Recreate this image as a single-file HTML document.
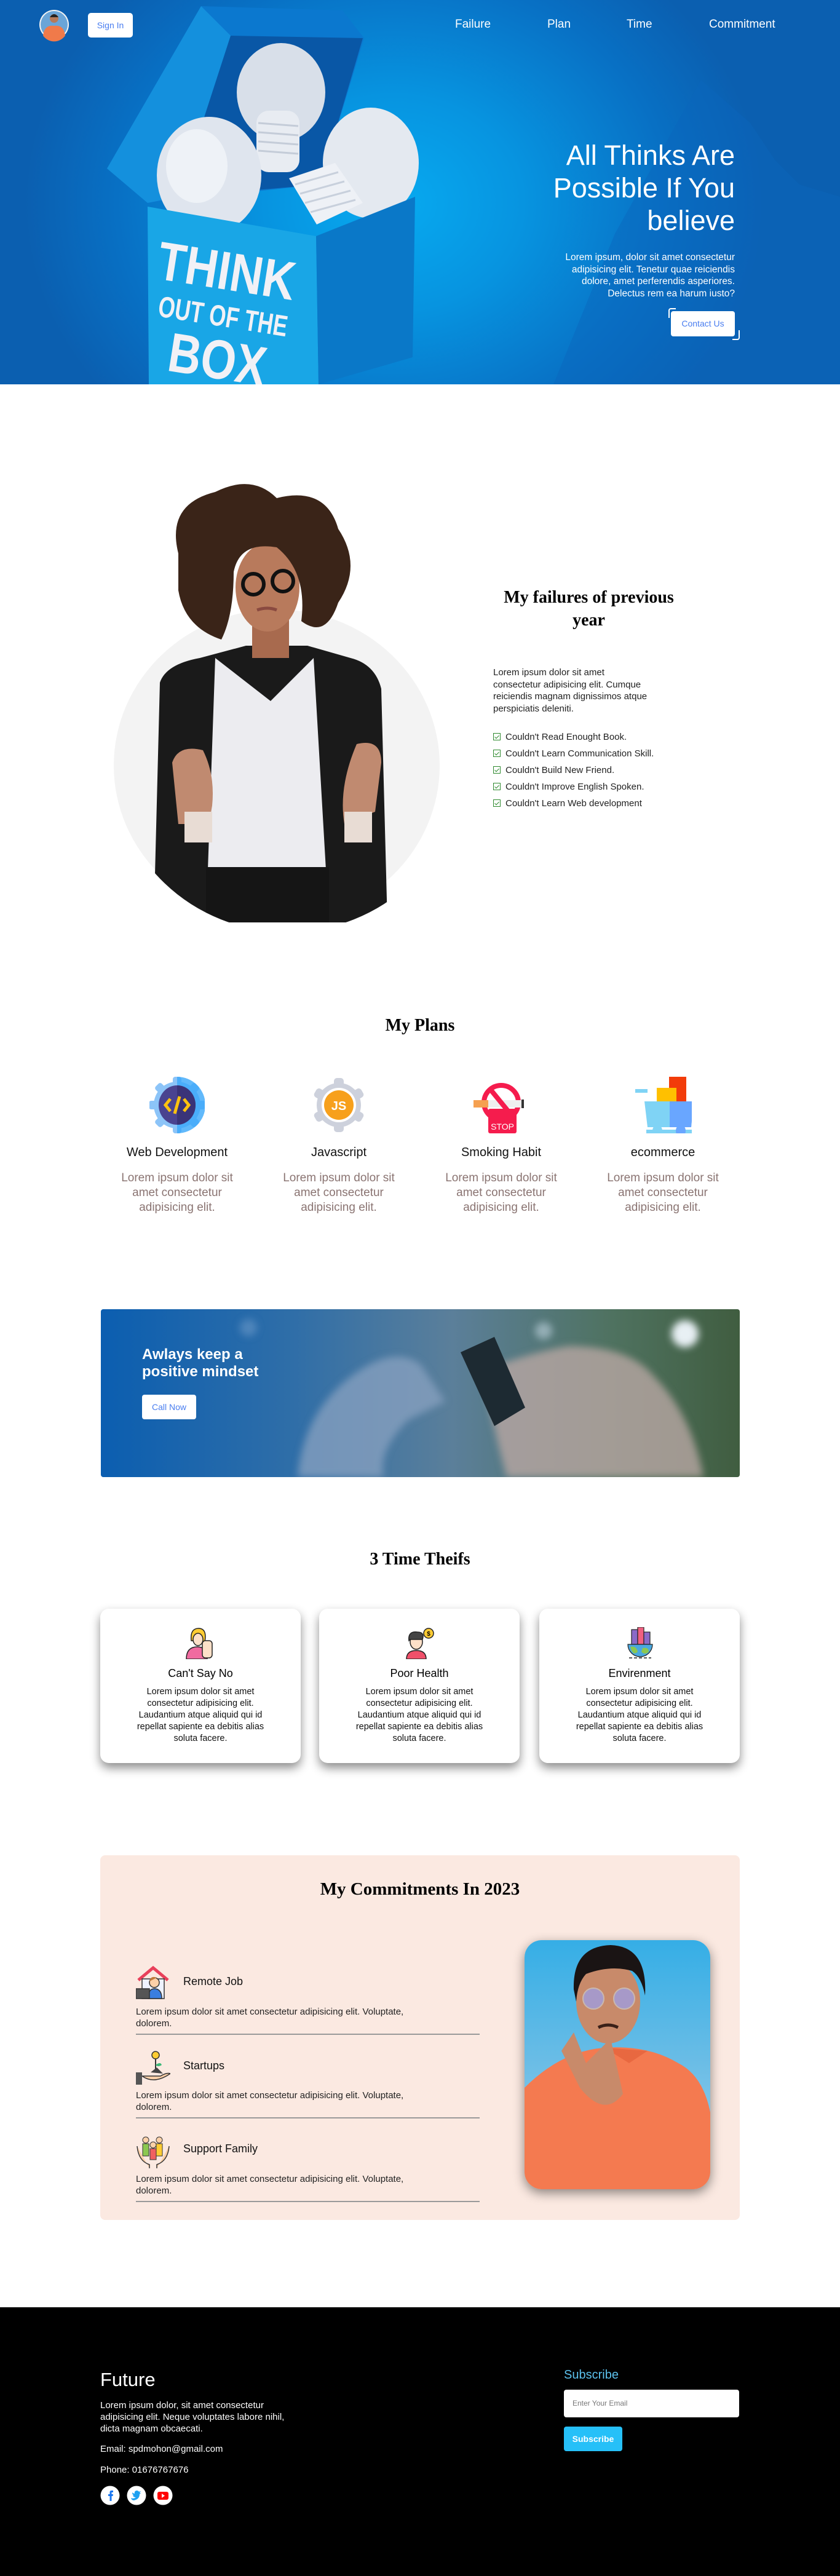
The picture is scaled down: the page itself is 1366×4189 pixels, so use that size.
<!DOCTYPE html>
<html><head><meta charset="utf-8">
<style>
*{margin:0;padding:0;box-sizing:border-box}
body{width:1366px;height:4189px;position:relative;background:#fff;font-family:"Liberation Sans",sans-serif;overflow:hidden}
.a{position:absolute}
.serif{font-family:"Liberation Serif","DejaVu Serif",serif;font-weight:bold;color:#000}
.nav{color:#fff;font-size:19px;top:29px}
.pt{font-size:20px;color:#111;text-align:center;width:260px;font-weight:500}
.pd{font-size:19px;color:#8a7472;text-align:center;width:260px;line-height:24px}
.card{background:#fff;border-radius:14px;box-shadow:0 8px 16px rgba(0,0,0,.45);width:326px;height:251px;top:2616px}
.card h4{position:absolute;top:95px;width:100%;text-align:center;font-size:18px;font-weight:500;color:#000}
.card p{position:absolute;top:126px;width:100%;text-align:center;font-size:14.5px;line-height:19px;color:#111}
.ct{font-size:18px;font-weight:500;color:#111}
.cd{font-size:15px;line-height:19px;color:#222;width:560px}
.hr{height:2px;background:#9a9a9a;width:559px;left:221px}
.li{font-size:15px;color:#222;left:802px}
.li b{display:inline-block;width:12px;height:12px;border:1.5px solid #2f8a2f;margin-right:8px;vertical-align:-1px;position:relative;background:#fff}
.li b:after{content:"";position:absolute;left:2.5px;top:0.5px;width:3px;height:6px;border:solid #2f8a2f;border-width:0 1.5px 1.5px 0;transform:rotate(45deg)}
</style></head><body>

<!-- HERO -->
<div class="a" style="left:0;top:0;width:1366px;height:625px;background:radial-gradient(ellipse 600px 500px at 640px 330px,#07aaf0 0%,#0794e0 35%,#0870c4 75%,#0b5fb0 100%)">
<svg class="a" style="left:0;top:0" width="1366" height="625">
<path d="M1140 130 L1220 200 L1260 260 L1300 300 L1366 320 L1366 625 L900 625 L1000 380 Z" fill="#0a66bd" opacity=".45"/>
<polygon points="327,10 557,17 592,62 520,300 240,330 174,274" fill="#0b78cf"/>
<polygon points="375,58 590,62 520,300 290,320" fill="#0957a6"/>
<polygon points="327,10 375,58 290,320 240,330 174,274" fill="#1490dd"/>
<ellipse cx="457" cy="150" rx="72" ry="80" fill="#d8dfe9"/>
<rect x="417" y="180" width="70" height="100" rx="20" fill="#e8ecf2"/>
<g stroke="#c4ccd8" stroke-width="3"><line x1="420" y1="200" x2="485" y2="205"/><line x1="420" y1="215" x2="485" y2="220"/><line x1="420" y1="230" x2="485" y2="235"/><line x1="420" y1="245" x2="485" y2="250"/></g>
<ellipse cx="340" cy="285" rx="85" ry="95" fill="#dfe5ee"/>
<ellipse cx="320" cy="270" rx="50" ry="60" fill="#eef2f7"/>
<ellipse cx="603" cy="265" rx="78" ry="90" fill="#e4e9f0"/>
<path d="M470 290 L545 265 L590 330 L515 365 Z" fill="#eef1f6"/>
<g stroke="#c8d0dc" stroke-width="3"><line x1="480" y1="300" x2="550" y2="280"/><line x1="488" y1="315" x2="560" y2="295"/><line x1="496" y1="330" x2="570" y2="310"/><line x1="505" y1="345" x2="578" y2="325"/></g>
<polygon points="240,336 514,384 518,625 242,625" fill="#19a6e6"/>
<polygon points="514,384 675,320 671,581 518,625" fill="#0a78c8"/>
<g font-family="Liberation Sans,sans-serif" font-weight="bold" fill="#f1f1f6" transform="rotate(9 360 480)">
<text x="250" y="470" font-size="88" textLength="225" lengthAdjust="spacingAndGlyphs">THINK</text>
<text x="262" y="530" font-size="48" textLength="212" lengthAdjust="spacingAndGlyphs">OUT OF THE</text>
<text x="290" y="615" font-size="90" textLength="160" lengthAdjust="spacingAndGlyphs">BOX</text>
</g>
<circle cx="88" cy="40" r="24" fill="#f3f3f3"/>
<circle cx="88" cy="40" r="22" fill="#6aa5d8"/>
<path d="M70 58 Q72 40 88 42 Q104 40 106 58 A22 22 0 0 1 70 58Z" fill="#f07a4a"/>
<circle cx="88" cy="30" r="7" fill="#b67a5a"/><path d="M81 28 Q88 18 95 28" fill="#222"/>
</svg>
<div class="a" style="left:143px;top:21px;width:73px;height:40px;background:#fff;border-radius:5px;color:#4a7ef0;font-size:14px;text-align:center;line-height:40px">Sign In</div>
<div class="a nav" style="left:740px">Failure</div>
<div class="a nav" style="left:890px">Plan</div>
<div class="a nav" style="left:1019px">Time</div>
<div class="a nav" style="left:1153px">Commitment</div>
<div class="a" style="right:171px;top:226px;width:400px;text-align:right;color:#fff;font-size:45px;line-height:53px;font-weight:500">All Thinks Are<br>Possible If You<br>believe</div>
<div class="a" style="right:171px;top:409px;width:400px;text-align:right;color:#fff;font-size:15.5px;line-height:19.5px">Lorem ipsum, dolor sit amet consectetur<br>adipisicing elit. Tenetur quae reiciendis<br>dolore, amet perferendis asperiores.<br>Delectus rem ea harum iusto?</div>
<div class="a" style="left:1087px;top:501px;width:12px;height:16px;border-left:2px solid #fff;border-top:2px solid #fff;border-radius:4px 0 0 0"></div>
<div class="a" style="left:1191px;top:537px;width:12px;height:16px;border-right:2px solid #fff;border-bottom:2px solid #fff;border-radius:0 0 4px 0"></div>
<div class="a" style="left:1091px;top:506px;width:104px;height:41px;background:#fff;border-radius:4px;color:#4a7ef0;font-size:14px;text-align:center;line-height:41px">Contact Us</div>
</div>

<!-- FAILURES -->
<svg class="a" style="left:150px;top:780px" width="600" height="722">
<ellipse cx="300" cy="465" rx="265" ry="254" fill="#f3f3f3"/>
<clipPath id="cc"><path d="M0 0 H600 V465 A265 254 0 0 1 35 465 V0Z"/></clipPath>
<g clip-path="url(#cc)">
<path d="M110 330 Q120 300 175 290 L250 270 L350 270 L420 290 Q460 300 470 340 L480 720 L100 720 Z" fill="#1a1a1a"/>
<path d="M200 290 L290 360 L360 290 L385 720 L185 720 Z" fill="#ececf0"/>
<path d="M130 460 Q140 430 180 440 Q200 480 195 530 L190 560 L140 560 Z" fill="#c08a70"/>
<path d="M430 430 Q470 420 470 460 L460 540 L410 560 Q400 500 430 430Z" fill="#c08a70"/>
<rect x="150" y="540" width="45" height="50" fill="#e8dcd4"/>
<rect x="410" y="540" width="45" height="50" fill="#e8dcd4"/>
<rect x="185" y="630" width="200" height="90" fill="#151515"/>
<rect x="260" y="220" width="60" height="70" fill="#a86a4e"/>
<ellipse cx="285" cy="175" rx="52" ry="72" fill="#b87a5c"/>
<path d="M140 120 Q120 40 200 20 Q260 -10 300 30 Q380 10 400 80 Q440 140 400 200 Q380 260 340 230 Q350 150 300 110 Q240 100 230 150 Q230 220 210 260 Q150 240 140 180Z" fill="#3a2418"/>
<circle cx="262" cy="170" r="17" fill="none" stroke="#111" stroke-width="6"/>
<circle cx="310" cy="165" r="17" fill="none" stroke="#111" stroke-width="6"/>
<path d="M268 212 Q285 206 300 212" stroke="#8a4a40" stroke-width="5" fill="none"/>
</g>
</svg>
<div class="a serif" style="left:800px;top:953px;width:315px;text-align:center;font-size:28px;line-height:37px">My failures of previous year</div>
<div class="a" style="left:802px;top:1084px;font-size:15px;line-height:19.5px;color:#222">Lorem ipsum dolor sit amet<br>consectetur adipisicing elit. Cumque<br>reiciendis magnam dignissimos atque<br>perspiciatis deleniti.</div>
<div class="a li" style="top:1190px"><b></b>Couldn't Read Enought Book.</div>
<div class="a li" style="top:1217px"><b></b>Couldn't Learn Communication Skill.</div>
<div class="a li" style="top:1244px"><b></b>Couldn't Build New Friend.</div>
<div class="a li" style="top:1271px"><b></b>Couldn't Improve English Spoken.</div>
<div class="a li" style="top:1298px"><b></b>Couldn't Learn Web development</div>

<!-- PLANS -->
<div class="a serif" style="left:483px;top:1652px;width:400px;text-align:center;font-size:28px">My Plans</div>
<svg class="a" style="left:243px;top:1751px" width="90" height="92" viewBox="0 0 90 92">
<g fill="#8cc4f8"><rect x="38" y="0" width="14" height="92" rx="4"/><rect x="38" y="0" width="14" height="92" rx="4" transform="rotate(45 45 46)"/><rect x="38" y="0" width="14" height="92" rx="4" transform="rotate(90 45 46)"/><rect x="38" y="0" width="14" height="92" rx="4" transform="rotate(135 45 46)"/></g>
<circle cx="45" cy="46" r="38" fill="#8cc4f8"/><path d="M45 0 V92 A46 46 0 0 0 45 0" fill="#3aa8fa" opacity=".8"/>
<ellipse cx="45" cy="46" rx="30" ry="32" fill="#4a4390"/><path d="M45 14 A30 32 0 0 1 45 78Z" fill="#3a3378"/>
<path d="M34 36 L26 46 L34 56 M56 36 L64 46 L56 56 M49 32 L41 60" stroke="#ffc20e" stroke-width="5" fill="none"/>
</svg>
<svg class="a" style="left:506px;top:1751px" width="90" height="92" viewBox="0 0 90 92">
<g fill="#cdd1dc"><rect x="37" y="2" width="16" height="88" rx="5"/><rect x="37" y="2" width="16" height="88" rx="5" transform="rotate(60 45 46)"/><rect x="37" y="2" width="16" height="88" rx="5" transform="rotate(120 45 46)"/></g>
<circle cx="45" cy="46" r="36" fill="#cdd1dc"/><circle cx="45" cy="46" r="28" fill="#fff"/><circle cx="45" cy="46" r="24" fill="#f7a01c"/>
<text x="45" y="54" text-anchor="middle" font-family="Liberation Sans,sans-serif" font-weight="bold" font-size="20" fill="#fff">JS</text>
</svg>
<svg class="a" style="left:770px;top:1751px" width="90" height="92" viewBox="0 0 90 92">
<rect x="24" y="52" width="46" height="40" rx="3" fill="#f51c4d"/>
<circle cx="45" cy="42" r="28" fill="none" stroke="#f51c4d" stroke-width="8"/>
<rect x="0" y="38" width="80" height="12" fill="#eee"/><rect x="0" y="38" width="24" height="12" fill="#f5a050"/><rect x="78" y="37" width="4" height="14" fill="#333"/>
<line x1="27" y1="20" x2="63" y2="64" stroke="#f51c4d" stroke-width="8"/>
<text x="47" y="86" text-anchor="middle" font-family="Liberation Sans,sans-serif" font-size="14" fill="#fff">STOP</text>
</svg>
<svg class="a" style="left:1033px;top:1751px" width="92" height="92" viewBox="0 0 92 92">
<rect x="55" y="0" width="28" height="42" fill="#f23c0a"/><rect x="35" y="18" width="32" height="24" fill="#ffc000"/>
<rect x="0" y="20" width="20" height="6" fill="#7fd3f5"/>
<path d="M15 40 H95 L91 82 H20Z" fill="#7fd3f5"/><path d="M56 40 H95 L91 82 H56Z" fill="#69a6ff"/>
<rect x="18" y="86" width="75" height="6" fill="#7fd3f5"/>
<ellipse cx="36" cy="88" rx="8" ry="10" fill="#7fd3f5"/><ellipse cx="74" cy="88" rx="8" ry="10" fill="#69a6ff"/>
</svg>
<div class="a pt" style="left:158px;top:1863px">Web Development</div>
<div class="a pt" style="left:421px;top:1863px">Javascript</div>
<div class="a pt" style="left:685px;top:1863px">Smoking Habit</div>
<div class="a pt" style="left:948px;top:1863px">ecommerce</div>
<div class="a pd" style="left:158px;top:1904px">Lorem ipsum dolor sit<br>amet consectetur<br>adipisicing elit.</div>
<div class="a pd" style="left:421px;top:1904px">Lorem ipsum dolor sit<br>amet consectetur<br>adipisicing elit.</div>
<div class="a pd" style="left:685px;top:1904px">Lorem ipsum dolor sit<br>amet consectetur<br>adipisicing elit.</div>
<div class="a pd" style="left:948px;top:1904px">Lorem ipsum dolor sit<br>amet consectetur<br>adipisicing elit.</div>

<!-- BANNER -->
<div class="a" style="left:164px;top:2129px;width:1039px;height:273px;border-radius:4px;overflow:hidden;background:linear-gradient(90deg,#0b5eb0 0%,#2f6ea8 30%,#5b7f9a 55%,#4f7260 80%,#405d40 100%)">
<svg class="a" style="left:0;top:0" width="1039" height="273">
<defs><filter id="bl"><feGaussianBlur stdDeviation="6"/></filter></defs>
<g filter="url(#bl)">
<circle cx="950" cy="40" r="22" fill="#e8f0f4"/><circle cx="720" cy="35" r="14" fill="#b0c6d0" opacity=".7"/><circle cx="240" cy="30" r="14" fill="#6b98c8" opacity=".6"/>
<path d="M320 273 Q330 160 420 100 Q480 60 520 90 L560 150 L500 180 Q450 230 460 273Z" fill="#8aa2c0" opacity=".75"/>
<path d="M620 100 Q700 70 760 60 Q860 60 900 110 Q960 170 980 273 L660 273 Q640 200 620 100Z" fill="#b8a6a2" opacity=".8"/>
</g>
<path d="M585 70 L640 45 L690 160 L640 190 Z" fill="#1d2a32"/>
</svg>
<div class="a" style="left:67px;top:60px;color:#fff;font-size:24px;line-height:28px;font-weight:bold">Awlays keep a<br>positive mindset</div>
<div class="a" style="left:67px;top:139px;width:88px;height:40px;background:#fff;border-radius:4px;color:#4a7ef0;font-size:14px;text-align:center;line-height:40px">Call Now</div>
</div>

<!-- TIME THEIFS -->
<div class="a serif" style="left:483px;top:2520px;width:400px;text-align:center;font-size:28px">3 Time Theifs</div>
<div class="a card" style="left:163px">
<svg class="a" style="left:138px;top:30px" width="50" height="52" viewBox="0 0 50 52"><path d="M10 22 Q8 2 22 2 Q36 2 32 24Z" fill="#ffcc33" stroke="#222" stroke-width="1.5"/><ellipse cx="21" cy="20" rx="8" ry="10" fill="#fde0c8" stroke="#222" stroke-width="1.5"/><path d="M2 52 Q2 32 20 32 Q36 32 36 52Z" fill="#f06ba0" stroke="#222" stroke-width="1.5"/><rect x="28" y="22" width="16" height="28" rx="5" fill="#fde0c8" stroke="#222" stroke-width="1.5"/></svg>
<h4>Can't Say No</h4><p>Lorem ipsum dolor sit amet<br>consectetur adipisicing elit.<br>Laudantium atque aliquid qui id<br>repellat sapiente ea debitis alias<br>soluta facere.</p></div>
<div class="a card" style="left:519px">
<svg class="a" style="left:138px;top:30px" width="52" height="52" viewBox="0 0 52 52"><circle cx="40" cy="10" r="8" fill="#ffcc33" stroke="#222" stroke-width="1.5"/><text x="40" y="14" text-anchor="middle" font-size="10" font-family="Liberation Sans" font-weight="bold">$</text><ellipse cx="20" cy="24" rx="10" ry="12" fill="#fde0c8" stroke="#222" stroke-width="1.5"/><path d="M8 22 Q6 6 22 8 Q34 8 30 20 L10 20Z" fill="#444" stroke="#222" stroke-width="1.5"/><path d="M4 52 Q4 38 20 38 Q36 38 36 52Z" fill="#f0506a" stroke="#222" stroke-width="1.5"/></svg>
<h4>Poor Health</h4><p>Lorem ipsum dolor sit amet<br>consectetur adipisicing elit.<br>Laudantium atque aliquid qui id<br>repellat sapiente ea debitis alias<br>soluta facere.</p></div>
<div class="a card" style="left:877px">
<svg class="a" style="left:138px;top:30px" width="52" height="52" viewBox="0 0 52 52"><rect x="12" y="4" width="10" height="24" fill="#8a6ac8" stroke="#222" stroke-width="1.2"/><rect x="22" y="0" width="10" height="28" fill="#f06080" stroke="#222" stroke-width="1.2"/><rect x="32" y="8" width="10" height="20" fill="#8a6ac8" stroke="#222" stroke-width="1.2"/><path d="M6 28 H46 A20 20 0 0 1 6 28Z" fill="#4aa8e0" stroke="#222" stroke-width="1.2"/><path d="M10 32 Q20 30 22 40 Q16 46 12 38Z M30 34 Q40 32 40 40 Q34 46 28 40Z" fill="#8cc850"/><line x1="8" y1="50" x2="44" y2="50" stroke="#222" stroke-width="1.5" stroke-dasharray="5 3"/></svg>
<h4>Envirenment</h4><p>Lorem ipsum dolor sit amet<br>consectetur adipisicing elit.<br>Laudantium atque aliquid qui id<br>repellat sapiente ea debitis alias<br>soluta facere.</p></div>

<!-- COMMITMENTS -->
<div class="a" style="left:163px;top:3017px;width:1040px;height:593px;background:#fbe9e1;border-radius:8px"></div>
<div class="a serif" style="left:383px;top:3056px;width:600px;text-align:center;font-size:29px">My Commitments In 2023</div>
<svg class="a" style="left:221px;top:3196px" width="56" height="56" viewBox="0 0 56 56"><path d="M4 24 L28 4 L52 24" fill="none" stroke="#e8405a" stroke-width="5"/><rect x="10" y="22" width="36" height="32" fill="#eef2ff" stroke="#333" stroke-width="1.5"/><circle cx="30" cy="28" r="8" fill="#fcd0a8" stroke="#333" stroke-width="1.5"/><path d="M22 26 Q24 16 34 20" fill="#c07a3a"/><path d="M20 54 Q20 38 30 38 Q42 38 42 54Z" fill="#3a7ee0" stroke="#333" stroke-width="1.5"/><rect x="0" y="38" width="22" height="16" fill="#555" stroke="#333" stroke-width="1.5"/></svg>
<div class="a ct" style="left:298px;top:3212px">Remote Job</div>
<div class="a cd" style="left:221px;top:3262px">Lorem ipsum dolor sit amet consectetur adipisicing elit. Voluptate,<br>dolorem.</div>
<div class="a hr" style="top:3307px"></div>
<svg class="a" style="left:221px;top:3334px" width="56" height="56" viewBox="0 0 56 56"><circle cx="32" cy="8" r="6" fill="#ffcc33" stroke="#333" stroke-width="1.5"/><line x1="32" y1="14" x2="32" y2="32" stroke="#333" stroke-width="2"/><path d="M32 24 Q40 18 42 24 Q36 28 32 24" fill="#3cb878"/><path d="M24 36 L34 28 L44 38 Z" fill="#444"/><path d="M10 42 Q30 56 56 38 Q50 36 40 42 L20 42Z" fill="#fcd0a8" stroke="#333" stroke-width="1.5"/><rect x="0" y="36" width="10" height="20" fill="#555"/></svg>
<div class="a ct" style="left:298px;top:3349px">Startups</div>
<div class="a cd" style="left:221px;top:3398px">Lorem ipsum dolor sit amet consectetur adipisicing elit. Voluptate,<br>dolorem.</div>
<div class="a hr" style="top:3443px"></div>
<svg class="a" style="left:221px;top:3470px" width="56" height="56" viewBox="0 0 56 56"><circle cx="16" cy="10" r="5" fill="#fcd0a8" stroke="#333"/><circle cx="38" cy="10" r="5" fill="#fcd0a8" stroke="#333"/><circle cx="28" cy="18" r="5" fill="#fcd0a8" stroke="#333"/><rect x="11" y="16" width="10" height="20" fill="#8cc850" stroke="#333"/><rect x="33" y="16" width="10" height="20" fill="#ffcc33" stroke="#333"/><rect x="23" y="24" width="10" height="18" fill="#f06060" stroke="#333"/><path d="M2 20 Q4 44 22 50 L22 56 M54 20 Q52 44 34 50 L34 56" fill="#fcd0a8" stroke="#333" stroke-width="1.5"/></svg>
<div class="a ct" style="left:298px;top:3484px">Support Family</div>
<div class="a cd" style="left:221px;top:3534px">Lorem ipsum dolor sit amet consectetur adipisicing elit. Voluptate,<br>dolorem.</div>
<div class="a hr" style="top:3579px"></div>
<div class="a" style="left:853px;top:3155px;width:302px;height:405px;border-radius:28px;overflow:hidden;box-shadow:0 6px 18px rgba(0,0,0,.45);background:linear-gradient(180deg,#35aee6 0%,#6bbde6 50%,#9fd2ee 100%)">
<svg width="302" height="405">
<path d="M0 240 Q60 180 130 175 Q200 170 250 200 Q290 220 302 280 L302 405 L0 405Z" fill="#f47a50"/>
<path d="M130 175 L170 200 L200 180Z" fill="#e86840"/>
<ellipse cx="136" cy="100" rx="52" ry="68" fill="#c88a6a"/>
<path d="M80 80 Q78 10 140 8 Q200 10 196 90 Q190 60 175 50 Q140 40 100 55 Q86 70 84 100Z" fill="#1a1414"/>
<circle cx="112" cy="95" r="17" fill="#9aa0f0" opacity=".7" stroke="#ccc" stroke-width="2"/>
<circle cx="162" cy="95" r="17" fill="#9aa0f0" opacity=".7" stroke="#ccc" stroke-width="2"/>
<path d="M120 142 Q136 134 152 142" stroke="#3a2018" stroke-width="5" fill="none"/>
<path d="M60 180 L80 150 L100 200 L140 160 L160 250 Q130 290 90 240Z" fill="#c88a6a"/>
</svg></div>

<!-- FOOTER -->
<div class="a" style="left:0;top:3752px;width:1366px;height:437px;background:#000"></div>
<div class="a" style="left:163px;top:3852px;color:#fff;font-size:31px;font-weight:500">Future</div>
<div class="a" style="left:163px;top:3902px;color:#fff;font-size:15px;line-height:19px">Lorem ipsum dolor, sit amet consectetur<br>adipisicing elit. Neque voluptates labore nihil,<br>dicta magnam obcaecati.</div>
<div class="a" style="left:163px;top:3974px;color:#fff;font-size:15px">Email: spdmohon@gmail.com</div>
<div class="a" style="left:163px;top:4008px;color:#fff;font-size:15px">Phone: 01676767676</div>
<svg class="a" style="left:163px;top:4042px" width="120" height="32">
<circle cx="16" cy="16" r="15.5" fill="#fff"/><path d="M18 8 H21 V11 H18.5 V14 H21 L20.5 17 H18.5 V25 H15.5 V17 H13 V14 H15.5 V11 Q15.5 8 18 8Z" fill="#1877f2"/>
<circle cx="59" cy="16" r="15.5" fill="#fff"/><path d="M50 20 Q54 22 58 19 Q54 19 53 16 Q55 16 55 16 Q52 15 52 11 Q54 13 56 13 Q55 9 59 8 Q62 8 63 10 L66 9 L64 12 Q66 12 66 12 L64 14 Q64 22 55 24 Q51 24 50 20Z" fill="#1da1f2"/>
<circle cx="102" cy="16" r="15.5" fill="#fff"/><rect x="93" y="10" width="18" height="13" rx="3" fill="#f00"/><path d="M100 13 L105 16.5 L100 20Z" fill="#fff"/>
</svg>
<div class="a" style="left:917px;top:3851px;color:#5cc2ee;font-size:20px;font-weight:500">Subscribe</div>
<div class="a" style="left:917px;top:3886px;width:285px;height:45px;background:#fff;border-radius:4px;color:#777;font-size:12px;line-height:45px;padding-left:14px">Enter Your Email</div>
<div class="a" style="left:917px;top:3946px;width:95px;height:40px;background:#26c0f8;border-radius:4px;color:#fff;font-size:14px;font-weight:bold;text-align:center;line-height:40px">Subscribe</div>
</body></html>
